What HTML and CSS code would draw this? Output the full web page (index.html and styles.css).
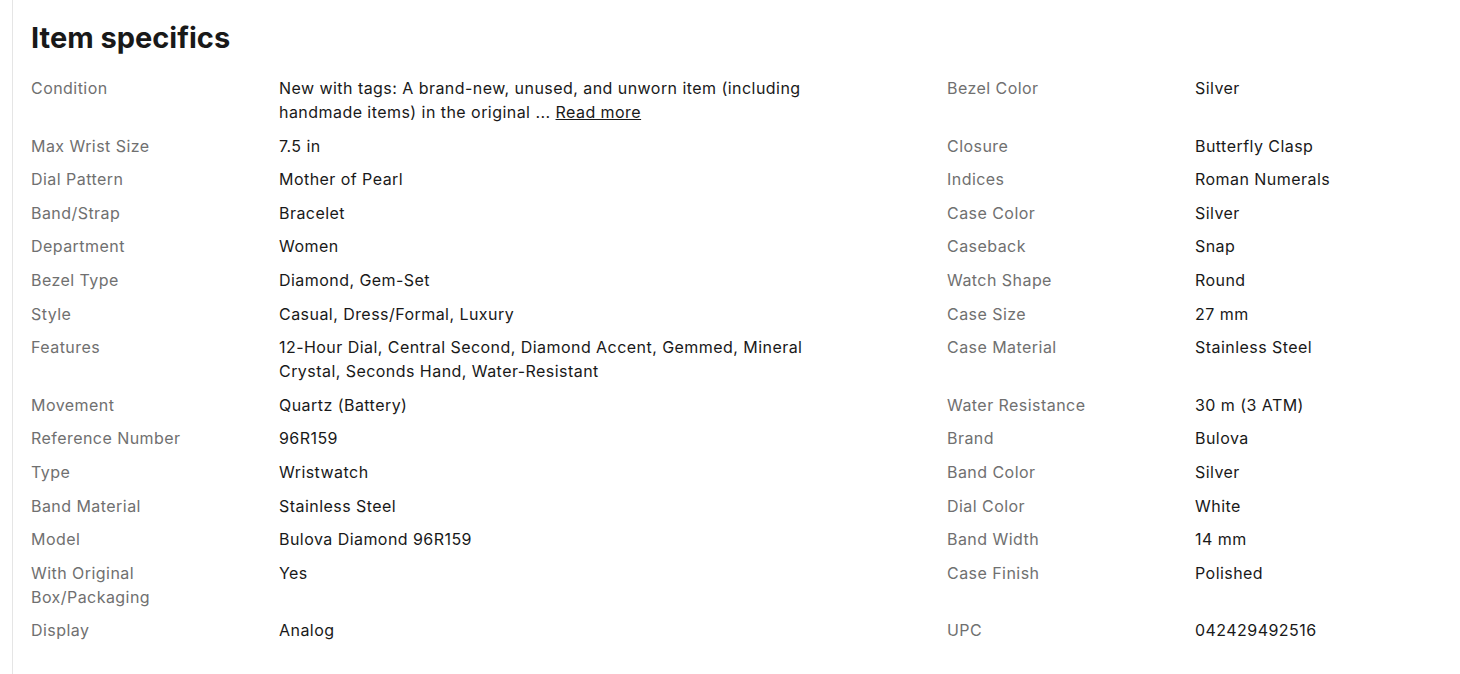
FILE: index.html
```html
<!DOCTYPE html>
<html>
<head>
<meta charset="utf-8">
<link rel="stylesheet" href="styles.css">
</head>
<body>
<section class="specs">
  <h2 class="title">Item specifics</h2>
  <div class="grid">
    <div class="lbl">Condition</div>
    <div class="val">New with tags: A brand-new, unused, and unworn item (including handmade items) in the original ... <a class="more" href="#">Read more</a></div>
    <div class="lbl">Bezel Color</div><div class="val">Silver</div>

    <div class="lbl">Max Wrist Size</div><div class="val">7.5 in</div>
    <div class="lbl">Closure</div><div class="val">Butterfly Clasp</div>

    <div class="lbl">Dial Pattern</div><div class="val">Mother of Pearl</div>
    <div class="lbl">Indices</div><div class="val">Roman Numerals</div>

    <div class="lbl">Band/Strap</div><div class="val">Bracelet</div>
    <div class="lbl">Case Color</div><div class="val">Silver</div>

    <div class="lbl">Department</div><div class="val">Women</div>
    <div class="lbl">Caseback</div><div class="val">Snap</div>

    <div class="lbl">Bezel Type</div><div class="val">Diamond, Gem-Set</div>
    <div class="lbl">Watch Shape</div><div class="val">Round</div>

    <div class="lbl">Style</div><div class="val">Casual, Dress/Formal, Luxury</div>
    <div class="lbl">Case Size</div><div class="val">27 mm</div>

    <div class="lbl">Features</div><div class="val">12-Hour Dial, Central Second, Diamond Accent, Gemmed, Mineral Crystal, Seconds Hand, Water-Resistant</div>
    <div class="lbl">Case Material</div><div class="val">Stainless Steel</div>

    <div class="lbl">Movement</div><div class="val">Quartz (Battery)</div>
    <div class="lbl">Water Resistance</div><div class="val">30 m (3 ATM)</div>

    <div class="lbl">Reference Number</div><div class="val">96R159</div>
    <div class="lbl">Brand</div><div class="val">Bulova</div>

    <div class="lbl">Type</div><div class="val">Wristwatch</div>
    <div class="lbl">Band Color</div><div class="val">Silver</div>

    <div class="lbl">Band Material</div><div class="val">Stainless Steel</div>
    <div class="lbl">Dial Color</div><div class="val">White</div>

    <div class="lbl">Model</div><div class="val">Bulova Diamond 96R159</div>
    <div class="lbl">Band Width</div><div class="val">14 mm</div>

    <div class="lbl">With Original Box/Packaging</div><div class="val">Yes</div>
    <div class="lbl">Case Finish</div><div class="val">Polished</div>

    <div class="lbl">Display</div><div class="val">Analog</div>
    <div class="lbl">UPC</div><div class="val">042429492516</div>
  </div>
</section>
</body>
</html>
```
FILE: styles.css
```css
html, body {
  margin: 0;
  padding: 0;
  background: #fff;
}
body {
  font-family: Inter, "Liberation Sans", sans-serif;
  color: #191919;
  overflow: hidden;
  height: 674px;
}
.specs {
  margin-left: 12px;
  border-left: 1px solid #e5e5e5;
  padding: 20px 0 0 18px;
  min-height: 674px;
  box-sizing: border-box;
}
.title {
  margin: 0 0 20px;
  font-size: 29px;
  line-height: 36px;
  font-weight: 700;
  letter-spacing: 0;
}
.grid {
  display: grid;
  grid-template-columns: 248px 668px 248px 1fr;
  row-gap: 9.6px;
  font-size: 16px;
  line-height: 24px;
  letter-spacing: 0.45px;
}
.lbl {
  color: #707070;
  padding-right: 40px;
}
.val {
  color: #191919;
  max-width: 570px;
}
.more {
  color: #191919;
  text-decoration: underline;
}
```
